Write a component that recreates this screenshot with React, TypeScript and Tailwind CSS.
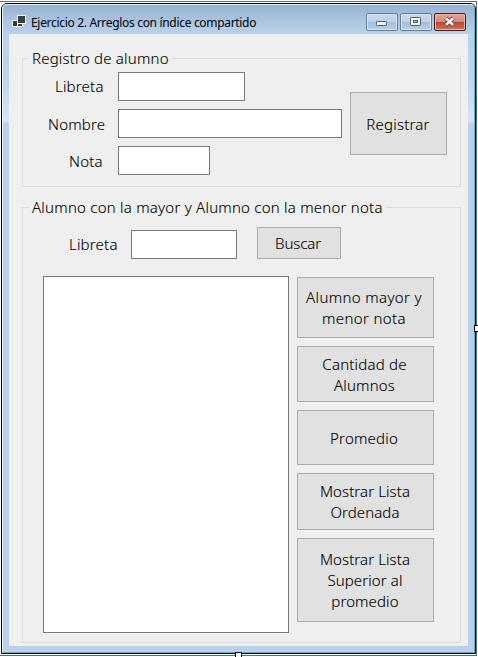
import type { ReactNode } from "react";

function Label({ children, className }: { children: ReactNode; className: string }) {
  return <label className={`shrink-0 whitespace-nowrap ${className}`}>{children}</label>;
}

function Field({ className }: { className: string }) {
  return <input className={`block h-[29px] shrink-0 border border-[#7a7a7a] bg-white outline-none ${className}`} />;
}

function Button({ lines, className }: { lines: string[]; className: string }) {
  return (
    <button className={`flex shrink-0 flex-col items-center justify-center whitespace-nowrap border border-[#adadad] bg-[#e1e1e1] leading-[21px] ${className}`}>
      {lines.map((line) => (
        <span key={line}>{line}</span>
      ))}
    </button>
  );
}

function FormIcon() {
  return (
    <svg width="14" height="14" viewBox="0 0 14 14" shapeRendering="crispEdges">
      <path fill="#f4f8fc" d="M5 0h9v9h-3v3H0V5h5z" />
      <path fill="#3c3c3c" d="M6 1h7v7H6zM1 6h4v5H1zM6 9h4v2H6z" />
    </svg>
  );
}

function TitleButton({ kind }: { kind: "min" | "max" | "close" }) {
  const close = kind === "close";
  return (
    <button
      className={`flex h-[18px] w-8 items-center justify-center rounded-[2px] border ${
        close
          ? "border-[#54191a] bg-[linear-gradient(to_bottom,#e0a595_0%,#d58a7b_48%,#bb4634_52%,#cf7455_100%)] shadow-[inset_0_0_0_1px_#e7b5a9]"
          : "border-[#66809b] bg-[linear-gradient(to_bottom,#c8daed_0%,#bcd1e8_48%,#a3bfdc_52%,#b8d2ec_100%)] shadow-[inset_0_0_0_1px_#d3e3f3]"
      }`}
    >
      <svg width="14" height="12" viewBox="0 0 14 12">
        {kind === "min" && <rect x="1.5" y="5.5" width="10" height="4" rx="0.7" fill="#fff" stroke="#535d68" />}
        {kind === "max" && (
          <>
            <rect x="1.5" y="1.5" width="10" height="8" rx="0.7" fill="#fff" stroke="#535d68" />
            <rect x="4.5" y="4.5" width="4" height="2" fill="#a9c2dc" stroke="#535d68" />
          </>
        )}
        {kind === "close" && (
          <>
            <path d="M2.8 2.1l7.4 7M10.2 2.1L2.8 9.1" stroke="#6a4248" strokeWidth="4.2" />
            <path d="M3 2.3l7 6.6M10 2.3L3 8.9" stroke="#fff" strokeWidth="2.5" />
          </>
        )}
      </svg>
    </button>
  );
}

export default function App() {
  return (
    <div className="relative h-[657px] w-[478px] overflow-hidden bg-white font-['Noto_Sans',sans-serif] text-[15px] font-light leading-[21px] tracking-[0.2px] text-black [-webkit-text-stroke:0.1px_black]">
      <div className="absolute -left-2 top-px h-[655px] w-[485px] border border-[#5f6b68]" />
      <div className="absolute left-px top-[3px] flex h-[651px] w-[475px] flex-col rounded-t-[6px] border border-black bg-[#bbd0ea]">
        <div className="flex min-h-0 flex-1 flex-col rounded-t-[5px] border border-b-[#4fb9c8] border-l-[#e6f3fa] border-r-[#48bcd4] border-t-[#e4eef8] bg-[linear-gradient(to_bottom,#98b4d3_0px,#b9d1ea_28px,#bfd5ee_75px,#d6e5f6_117px,#bbd0ea_118px)] pb-[6px] pl-[6px] pr-[6px]">
          <header className="flex h-[29px] shrink-0 items-center">
            <div className="ml-[3px] mt-[4px]"><FormIcon /></div>
            <h1 className="ml-[5px] mt-[7px] whitespace-nowrap text-[12px] font-normal leading-[16px] tracking-[-0.32px] [-webkit-text-stroke:0px]">
              Ejercicio 2. Arreglos con índice compartido
            </h1>
            <div className="ml-auto mr-[2px] mt-[5px] flex gap-[2px]">
              <TitleButton kind="min" />
              <TitleButton kind="max" />
              <TitleButton kind="close" />
            </div>
          </header>

          <main className="flex min-h-0 flex-1 flex-col bg-[#efefef] pl-[13px] pt-[14px]">
            <fieldset className="h-[139px] w-[439px] shrink-0 border border-[#dcdcdc]">
              <legend className="ml-[6px] h-[21px] whitespace-nowrap px-[3px]">Registro de alumno</legend>
              <div className="flex pt-[3px]">
                <div className="flex w-[327px] flex-col gap-[8px]">
                  <div className="flex items-center">
                    <Label className="w-[95px] pl-[32px]">Libreta</Label>
                    <Field className="w-[127px]" />
                  </div>
                  <div className="flex items-center">
                    <Label className="w-[95px] pl-[25px] pt-px">Nombre</Label>
                    <Field className="w-[224px]" />
                  </div>
                  <div className="flex items-center">
                    <Label className="w-[95px] pl-[46px] pt-px">Nota</Label>
                    <Field className="w-[92px]" />
                  </div>
                </div>
                <Button lines={["Registrar"]} className="mt-[20px] h-[63px] w-[97px] pr-px pt-px" />
              </div>
            </fieldset>

            <fieldset className="mt-[10px] h-[446px] w-[439px] shrink-0 border border-[#dcdcdc]">
              <legend className="ml-[6px] h-[21px] whitespace-nowrap px-[3px] tracking-[0.23px]">
                Alumno con la mayor y Alumno con la menor nota
              </legend>
              <div className="flex h-[41px] items-end pl-[46px]">
                <Label className="w-[62px] pb-[4px]">Libreta</Label>
                <Field className="w-[106px]" />
                <Button lines={["Buscar"]} className="ml-[20px] h-[32px] w-[84px] pr-[2px] tracking-[-0.1px]" />
              </div>
              <div className="mt-[17px] flex gap-[8px] pl-[20px]">
                <div className="h-[357px] w-[246px] border border-[#7a7a7a] bg-white" />
                <div className="flex w-[137px] flex-col gap-[8px] pt-px">
                  <Button lines={["Alumno mayor y", "menor nota"]} className="h-[61px] pr-[3px] tracking-[0.36px]" />
                  <Button lines={["Cantidad de", "Alumnos"]} className="h-[56px] pr-[2px] pt-px" />
                  <Button lines={["Promedio"]} className="h-[55px] pr-[3px] pt-[2px]" />
                  <Button lines={["Mostrar Lista", "Ordenada"]} className="h-[57px] pr-px tracking-[0.1px]" />
                  <Button lines={["Mostrar Lista", "Superior al", "promedio"]} className="h-[84px] pr-px tracking-[0.1px]" />
                </div>
              </div>
            </fieldset>
          </main>
        </div>
      </div>
      <div className="absolute left-[474px] top-[325px] h-[7px] w-[7px] border border-black bg-white" />
      <div className="absolute left-[235px] top-[652px] h-[7px] w-[7px] border border-black bg-white" />
    </div>
  );
}
